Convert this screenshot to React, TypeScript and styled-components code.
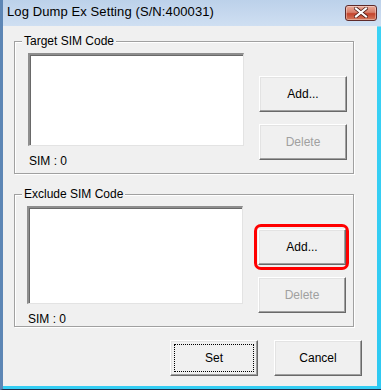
import React from "react";
import styled, { createGlobalStyle } from "styled-components";

const Global = createGlobalStyle`
    html, body {
        margin: 0;
        padding: 0;
        background: #ffffff;
    }
    * {
        box-sizing: border-box;
    }
`;

const Frame = styled.div`
    width: 381px;
    height: 390px;
    display: flex;
    flex-direction: column;
    background: linear-gradient(180deg, #bcd1ea 0px, #cfdff2 26px);
    border-left: 3px solid #5d86b5;
    border-right: 1px solid #24367a;
    border-bottom: 1px solid #1e2c4a;
    font-family: "Liberation Sans", Arial, sans-serif;
`;

const TitleBar = styled.div`
    height: 26px;
    display: flex;
    align-items: center;
    justify-content: space-between;
    padding: 0 3px 3px 4px;
`;

const Title = styled.span`
    font-family: "Liberation Sans", Arial, sans-serif;
    font-size: 13px;
    color: #000;
    letter-spacing: 0.1px;
`;

const CloseButton = styled.div`
    width: 32px;
    height: 16px;
    margin-top: 2px;
    border: 1px solid #5e2a2a;
    border-radius: 3px;
    background: linear-gradient(180deg, #eaa897 0%, #d8806c 45%, #c4432c 55%, #d47a5e 100%);
    display: flex;
    align-items: center;
    justify-content: center;
    box-shadow: inset 0 0 0 1px rgba(255, 255, 255, 0.35);
`;

const Client = styled.div`
    flex: 1;
    background: #f0f0f0;
    margin-right: 3px;
    border-bottom: 3px solid #34cdf3;
    display: flex;
    flex-direction: column;
    padding: 15px 0 0 11px;
    position: relative;
`;

const RightEdge = styled.div`
    position: absolute;
    top: -26px;
    right: -4px;
    bottom: -3px;
    width: 4px;
    background: linear-gradient(180deg, #bcd1ea 0px, #cfdff2 26px, #3ad2f5 27px, #2ec9f2 100%);
`;

const Group = styled.div<{ $mt?: number }>`
    position: relative;
    width: 340px;
    height: 133px;
    margin-top: ${(p) => p.$mt ?? 0}px;
    border: 1px solid #a0a0a0;
    box-shadow: inset 1px 1px 0 #ffffff, 1px 1px 0 #ffffff;
    display: grid;
    grid-template-columns: 216px 88px;
    column-gap: 15px;
    padding: 11px 0 0 ${(p) => (p.$mt ? 12 : 13)}px;
`;

const Legend = styled.span`
    position: absolute;
    top: -8px;
    left: 7px;
    padding: 0 2px;
    background: #f0f0f0;
    font-size: 12px;
    line-height: 14px;
    color: #000;
`;

const ListColumn = styled.div`
    display: flex;
    flex-direction: column;
`;

const ListBox = styled.div<{ $h: number }>`
    width: 216px;
    height: ${(p) => p.$h}px;
    background: #ffffff;
    border-top: 2px solid #8e8e8e;
    border-left: 2px solid #8e8e8e;
    border-right: 1px solid #e3e3e3;
    border-bottom: 1px solid #e3e3e3;
    box-shadow: inset 1px 1px 0 #696969;
`;

const Count = styled.div`
    margin-top: 8px;
    margin-left: 1px;
    font-size: 12px;
    line-height: 14px;
    color: #000;
`;

const ButtonColumn = styled.div`
    display: flex;
    flex-direction: column;
    gap: 12px;
    padding-top: 23px;
`;

const Button = styled.div<{ $disabled?: boolean; $focus?: boolean }>`
    position: relative;
    width: 88px;
    height: 36px;
    display: flex;
    align-items: center;
    justify-content: center;
    background: #f0f0f0;
    border-top: 1px solid #ffffff;
    border-left: 1px solid #ffffff;
    border-right: 1px solid #696969;
    border-bottom: 1px solid #696969;
    box-shadow: inset -1px -1px 0 #a0a0a0, inset 1px 1px 0 #e3e3e3;
    font-size: 12px;
    color: ${(p) => (p.$disabled ? "#a0a0a0" : "#000")};
    outline: ${(p) => (p.$focus ? "1px dotted #000" : "none")};
    outline-offset: -5px;
`;

const Highlight = styled.div`
    position: absolute;
    top: -6px;
    left: -5px;
    right: -4px;
    bottom: -6px;
    border: 3px solid #ff0000;
    border-radius: 7px;
    pointer-events: none;
`;

const Footer = styled.div`
    display: flex;
    justify-content: flex-end;
    gap: 16px;
    margin-top: 13px;
    padding-right: 15px;
`;

const CloseIcon = () => (
    <svg width="14" height="11" viewBox="0 0 14 11">
        <path
            d="M2 1.5 L12 9.5 M12 1.5 L2 9.5"
            stroke="#4a1a14"
            strokeWidth="3.6"
            strokeLinecap="square"
        />
        <path
            d="M2 1.5 L12 9.5 M12 1.5 L2 9.5"
            stroke="#ffffff"
            strokeWidth="2.2"
            strokeLinecap="square"
        />
    </svg>
);

const CodeGroup = ({
    label,
    listHeight,
    highlight,
    mt,
}: {
    label: string;
    listHeight: number;
    highlight?: boolean;
    mt?: number;
}) => (
    <Group $mt={mt}>
        <Legend>{label}</Legend>
        <ListColumn>
            <ListBox $h={listHeight} />
            <Count>SIM : 0</Count>
        </ListColumn>
        <ButtonColumn>
            <Button>
                Add...
                {highlight ? <Highlight /> : null}
            </Button>
            <Button $disabled>Delete</Button>
        </ButtonColumn>
    </Group>
);

const App = () => {
    return (
        <>
            <Global />
            <Frame>
                <TitleBar>
                    <Title>Log Dump Ex Setting (S/N:400031)</Title>
                    <CloseButton>
                        <CloseIcon />
                    </CloseButton>
                </TitleBar>
                <Client>
                    <RightEdge />
                    <CodeGroup label="Target SIM Code" listHeight={93} />
                    <CodeGroup label="Exclude SIM Code" listHeight={98} highlight mt={20} />
                    <Footer>
                        <Button $focus>Set</Button>
                        <Button>Cancel</Button>
                    </Footer>
                </Client>
            </Frame>
        </>
    );
};

export default App;
